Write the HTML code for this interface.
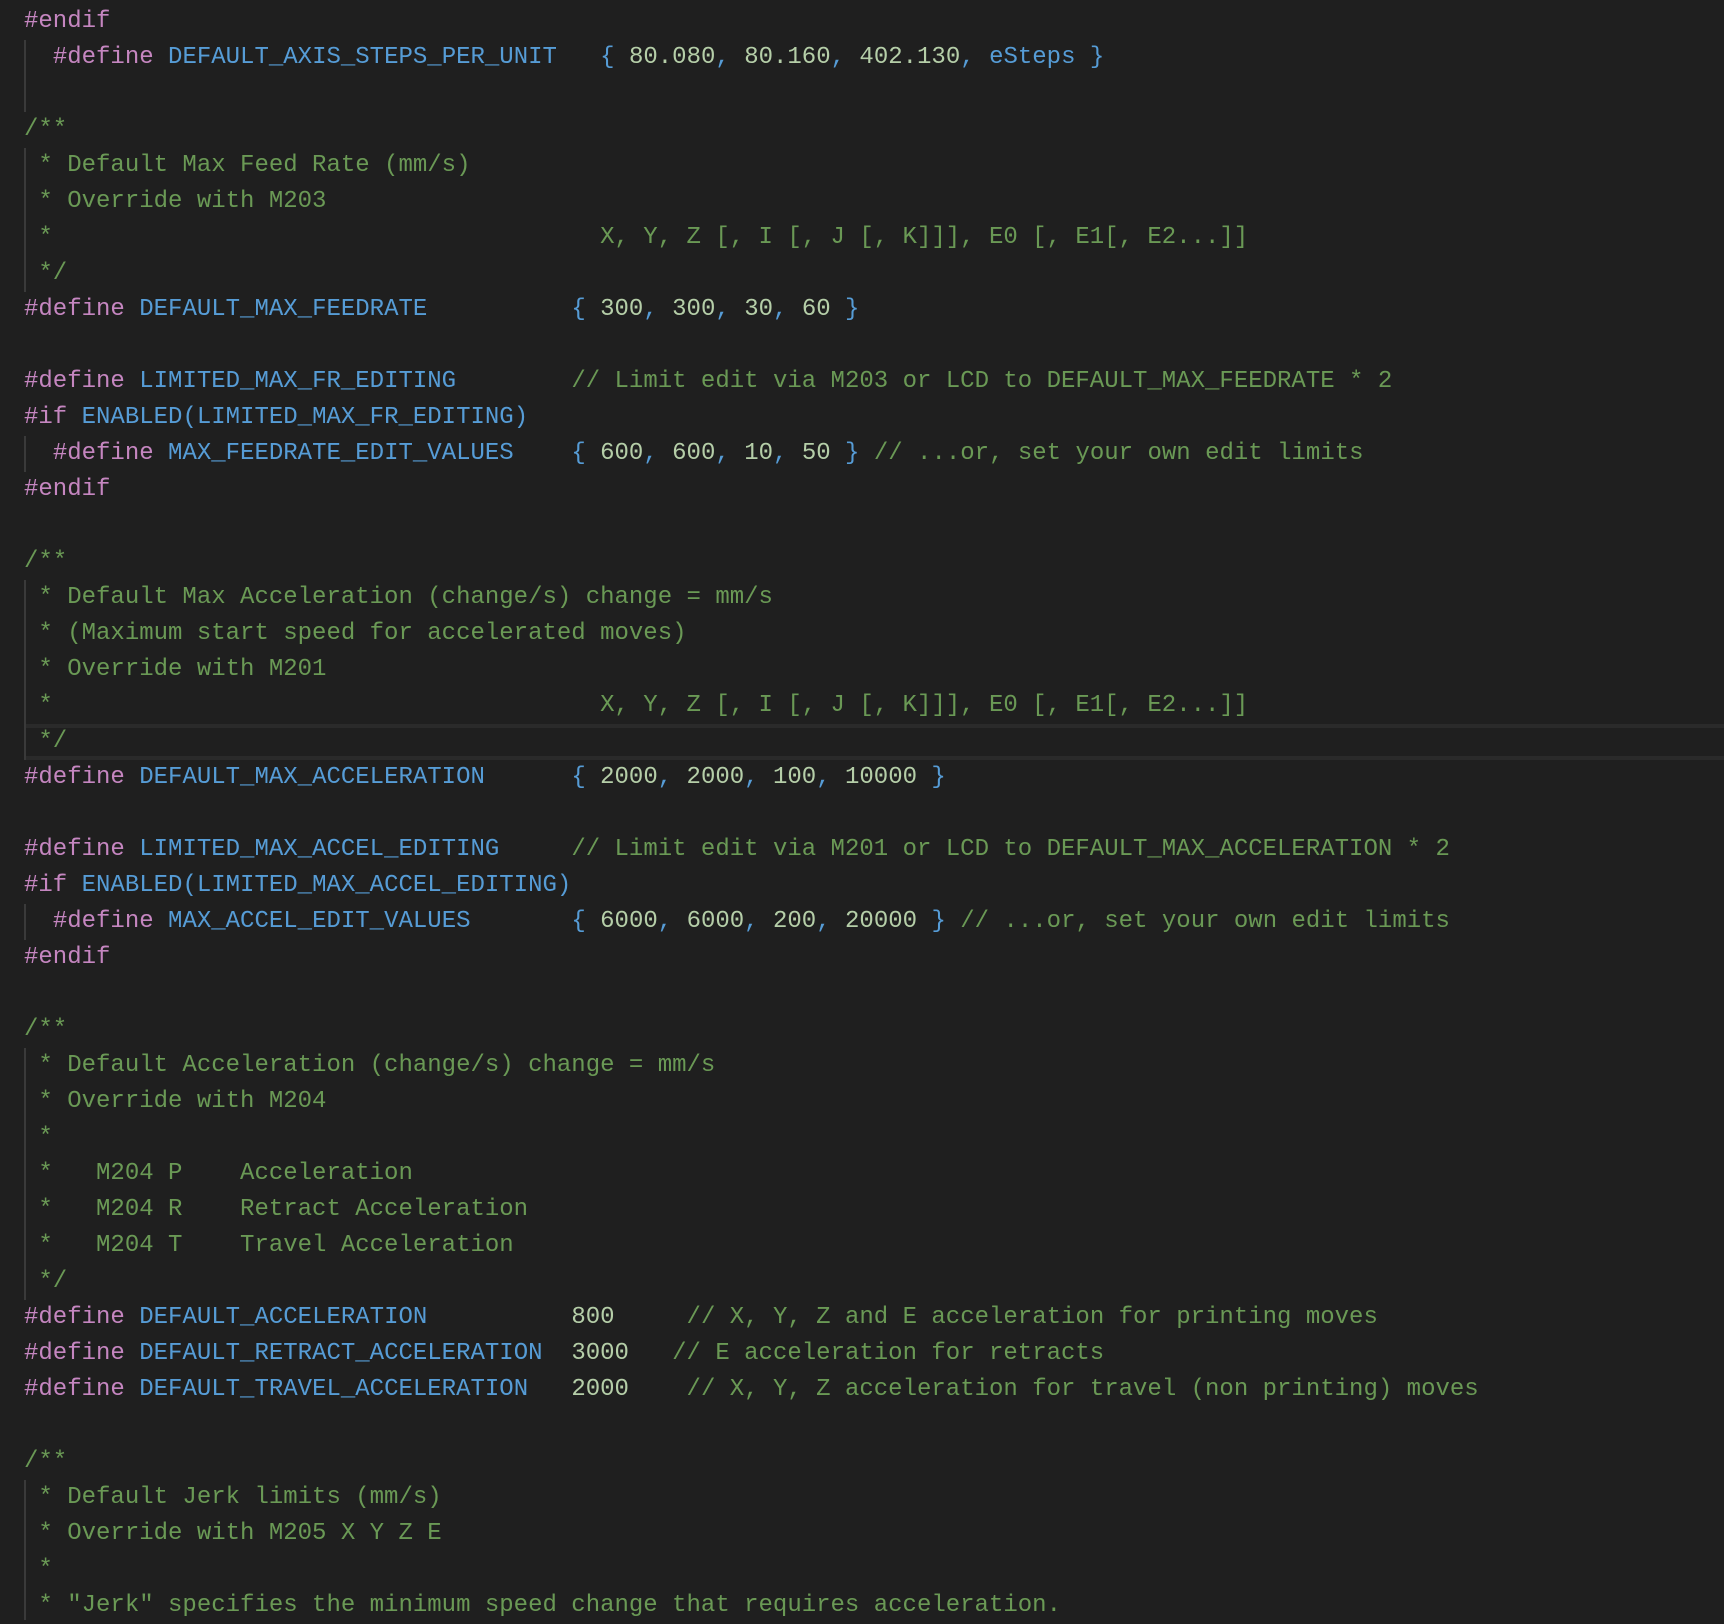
<!DOCTYPE html>
<html><head><meta charset="utf-8">
<style>
html,body{margin:0;padding:0;background:#1f1f1f;width:1724px;height:1618px;overflow:hidden}
.code{position:absolute;left:24px;top:4px;font-family:"Liberation Mono",monospace;font-size:24px;line-height:36px;white-space:pre;color:#d4d4d4}
.k{color:#c586c0}.m{color:#569cd6}.n{color:#b5cea8}.c{color:#6a9955}
.g{position:absolute;left:24px;width:2px;background:#3a3a3a}
.hl{position:absolute;left:24px;right:0;top:724px;height:28px;border-top:4px solid #2a2a2a;border-bottom:4px solid #2a2a2a}
</style></head><body>
<div class="hl"></div>
<div class="g" style="top:40px;height:72px"></div>
<div class="g" style="top:148px;height:144px"></div>
<div class="g" style="top:436px;height:36px"></div>
<div class="g" style="top:580px;height:180px"></div>
<div class="g" style="top:904px;height:36px"></div>
<div class="g" style="top:1048px;height:252px"></div>
<div class="g" style="top:1480px;height:140px"></div>
<div class="code"><span class="k">#endif</span>
  <span class="k">#define</span> <span class="m">DEFAULT_AXIS_STEPS_PER_UNIT</span>   <span class="m">{</span> <span class="n">80.080</span><span class="m">,</span> <span class="n">80.160</span><span class="m">,</span> <span class="n">402.130</span><span class="m">,</span> <span class="m">eSteps }</span>

<span class="c">/**</span>
<span class="c"> * Default Max Feed Rate (mm/s)</span>
<span class="c"> * Override with M203</span>
<span class="c"> *                                      X, Y, Z [, I [, J [, K]]], E0 [, E1[, E2...]]</span>
<span class="c"> */</span>
<span class="k">#define</span> <span class="m">DEFAULT_MAX_FEEDRATE</span>          <span class="m">{</span> <span class="n">300</span><span class="m">,</span> <span class="n">300</span><span class="m">,</span> <span class="n">30</span><span class="m">,</span> <span class="n">60</span> <span class="m">}</span>

<span class="k">#define</span> <span class="m">LIMITED_MAX_FR_EDITING</span>        <span class="c">// Limit edit via M203 or LCD to DEFAULT_MAX_FEEDRATE * 2</span>
<span class="k">#if</span> <span class="m">ENABLED(LIMITED_MAX_FR_EDITING)</span>
  <span class="k">#define</span> <span class="m">MAX_FEEDRATE_EDIT_VALUES</span>    <span class="m">{</span> <span class="n">600</span><span class="m">,</span> <span class="n">600</span><span class="m">,</span> <span class="n">10</span><span class="m">,</span> <span class="n">50</span> <span class="m">}</span> <span class="c">// ...or, set your own edit limits</span>
<span class="k">#endif</span>

<span class="c">/**</span>
<span class="c"> * Default Max Acceleration (change/s) change = mm/s</span>
<span class="c"> * (Maximum start speed for accelerated moves)</span>
<span class="c"> * Override with M201</span>
<span class="c"> *                                      X, Y, Z [, I [, J [, K]]], E0 [, E1[, E2...]]</span>
<span class="c"> */</span>
<span class="k">#define</span> <span class="m">DEFAULT_MAX_ACCELERATION</span>      <span class="m">{</span> <span class="n">2000</span><span class="m">,</span> <span class="n">2000</span><span class="m">,</span> <span class="n">100</span><span class="m">,</span> <span class="n">10000</span> <span class="m">}</span>

<span class="k">#define</span> <span class="m">LIMITED_MAX_ACCEL_EDITING</span>     <span class="c">// Limit edit via M201 or LCD to DEFAULT_MAX_ACCELERATION * 2</span>
<span class="k">#if</span> <span class="m">ENABLED(LIMITED_MAX_ACCEL_EDITING)</span>
  <span class="k">#define</span> <span class="m">MAX_ACCEL_EDIT_VALUES</span>       <span class="m">{</span> <span class="n">6000</span><span class="m">,</span> <span class="n">6000</span><span class="m">,</span> <span class="n">200</span><span class="m">,</span> <span class="n">20000</span> <span class="m">}</span> <span class="c">// ...or, set your own edit limits</span>
<span class="k">#endif</span>

<span class="c">/**</span>
<span class="c"> * Default Acceleration (change/s) change = mm/s</span>
<span class="c"> * Override with M204</span>
<span class="c"> *</span>
<span class="c"> *   M204 P    Acceleration</span>
<span class="c"> *   M204 R    Retract Acceleration</span>
<span class="c"> *   M204 T    Travel Acceleration</span>
<span class="c"> */</span>
<span class="k">#define</span> <span class="m">DEFAULT_ACCELERATION</span>          <span class="n">800</span>     <span class="c">// X, Y, Z and E acceleration for printing moves</span>
<span class="k">#define</span> <span class="m">DEFAULT_RETRACT_ACCELERATION</span>  <span class="n">3000</span>   <span class="c">// E acceleration for retracts</span>
<span class="k">#define</span> <span class="m">DEFAULT_TRAVEL_ACCELERATION</span>   <span class="n">2000</span>    <span class="c">// X, Y, Z acceleration for travel (non printing) moves</span>

<span class="c">/**</span>
<span class="c"> * Default Jerk limits (mm/s)</span>
<span class="c"> * Override with M205 X Y Z E</span>
<span class="c"> *</span>
<span class="c"> * "Jerk" specifies the minimum speed change that requires acceleration.</span>
</div>
</body></html>
